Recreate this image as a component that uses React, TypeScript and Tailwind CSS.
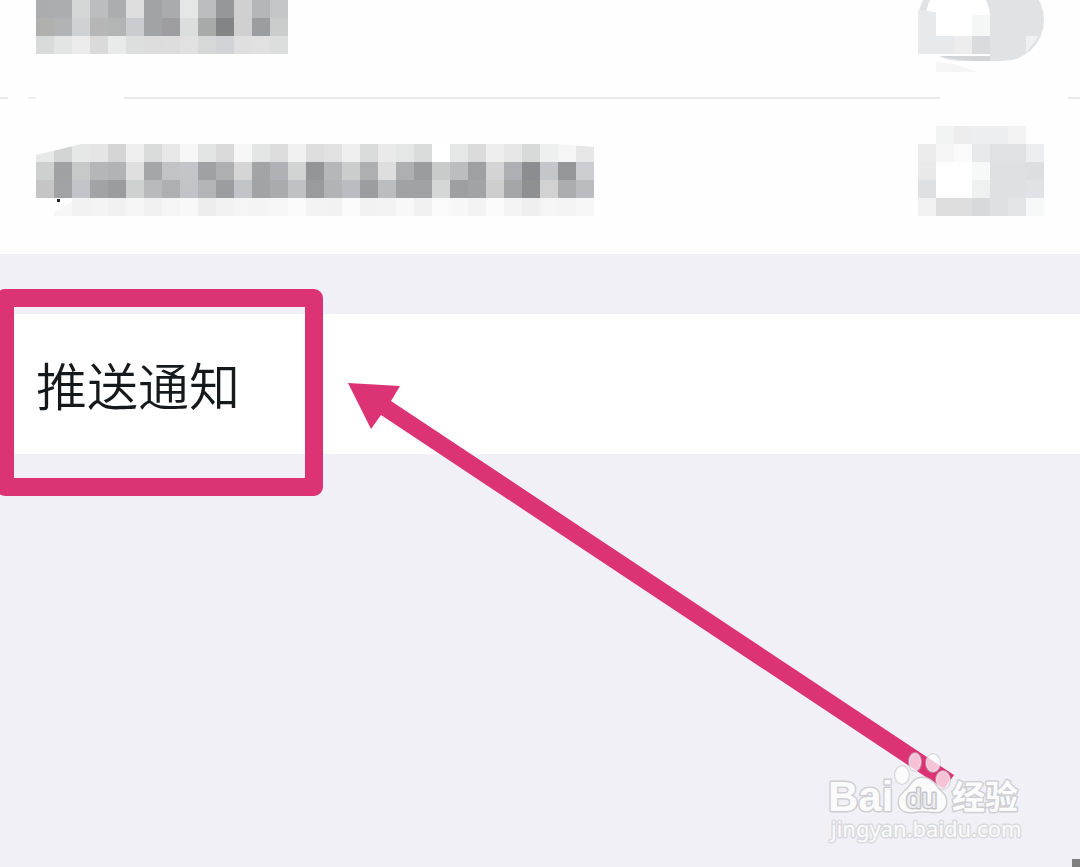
import { useState } from "react";

const CELL = 18;

// one string per row, one colour per 18px block, "-" leaves a block empty
const NAME_BLOCKS = [
  "abacae acadaf d5d7d6 bcbdbf acadaf dedede a2a3a5 aaabad e5e7e6 bcbdbf 969799 d0d0d1 b5b6b8 c5c6c8",
  "b0b1af b2b3b5 d0d1d3 b5b6b5 b3b4b4 caccd0 a2a3a5 9e9ea0 dcdedd a8aaa9 838486 d0d0d1 9c9da0 cbcdcc",
  "d9dbda e3e5e4 ebebeb dadada e9ebea dddfde dcdcdc dedddd e1e1e1 d6d8d8 d1d3d7 dfdfdf e0e1e0 dcdedd",
];

const DETAIL_BLOCKS = [
  "e7e9e8 d3d5d4 e6e8e7 e5e5e5 d5d5d5 efefef dadcdb e7e8e7 f7f7f7 e3e5e4 dadada f7f7f7 e4e6e5 dbdcdb f1f1f1 dedede e0e1e0 efefef dadcdb eaeaea e5e7e6 dadcdb ffffff e6e8e7 dbdbdb eeeeee e7e7e7 d8d9d9 eeefef f5f5f5 e7e7e7",
  "cdd0ce a0a1a3 c6c9c7 b5b6b8 b2b3b5 dfdfdf a5a6a8 c2c3c5 c4c5c8 a0a1a3 aeafb1 d5d5d5 a3a4a6 b0b1b4 d2d4d3 949597 b6b7b9 cbcdcc aeafb1 dedede aeafb0 9b9c9e c9cbca bcbdbf 9fa0a2 d4d4d4 aeafb2 8c8d8f c5c6c9 959698 cdced1",
  "c5c5c6 a2a3a5 c3c4c7 a2a3a5 9b9c9e cfd1d0 b9babc aeafb1 c2c3c6 b4b5b7 9c9d9f c2c3c6 a2a3a5 aaabad c0c1c3 9a9b9d b2b3b5 bbbcbf 9c9d9f bcbdbf a1a2a3 a1a2a3 d5d7d6 9e9fa0 a2a3a5 cecece a5a6a8 8f9092 d2d2d2 acadaf bbbcbf",
  "- f7f7f7 f2f2f2 f4f4f4 f1f1f1 f6f6f6 f1f1f1 f5f5f5 f8f8f8 ededed f2f2f2 f5f5f5 f4f4f4 f7f7f7 fafafa f3f3f3 f2f2f2 fafafa f2f2f2 f3f3f3 f8f8f8 f1f1f1 fafafa f7f7f7 f3f3f3 fafafa f4f4f4 efefef f5f5f5 f4f4f4 f7f7f7",
];

const SWITCH_BLOCKS = [
  "- f2f4f3 ededed eceef1 eceef1 f3f3f3 -",
  "ebebeb f5f5f5 fafafa e7e9ea e0e1e3 e0e1e3 eceef0",
  "e9e9e9 ffffff ffffff f7f9f8 dfe0e2 dfe0e2 dddee1",
  "dfe0e2 ffffff ffffff eff1f0 dfe0e2 dfe0e2 e1e2e5",
  "f2f2f2 dedede dedede d8d9db dfe0e3 e4e5e8 f7f8f8",
];

function Blocks({ rows }: { rows: string[] }) {
  return (
    <g shapeRendering="crispEdges">
      {rows.map((row, y) =>
        row.split(" ").map((c, x) =>
          c === "-" ? null : (
            <rect
              key={`${x}-${y}`}
              x={x * CELL}
              y={y * CELL}
              width={CELL}
              height={CELL}
              fill={`#${c}`}
            />
          )
        )
      )}
    </g>
  );
}

function Switch({ label, children }: { label: string; children: React.ReactNode }) {
  const [on, setOn] = useState(false);

  return (
    <button
      type="button"
      role="switch"
      aria-checked={on}
      aria-label={label}
      onClick={() => setOn(!on)}
      className="shrink-0"
    >
      {children}
    </button>
  );
}

function Divider() {
  return (
    <div className="flex h-0.5">
      <span className="w-2 bg-[#e9e9e9]" />
      <span className="w-5" />
      <span className="w-2 bg-[#efefef]" />
      <span className="w-[88px]" />
      <span className="flex-1 bg-[#e9e9e9]" />
      <span className="w-[128px]" />
      <span className="w-3 bg-[#e9e9e9]" />
    </div>
  );
}

function Watermark() {
  return (
    <svg
      width="200"
      height="100"
      viewBox="825 748 200 100"
      className="absolute right-[55px] bottom-[19px]"
      aria-label="Baidu 经验"
    >
      <g
        fill="#fbfbfc"
        stroke="#cfcfd3"
        strokeWidth="3"
        paintOrder="stroke"
        strokeLinejoin="round"
      >
        <g fill="#fff" fillOpacity="0.7" stroke="#c4c4c8" strokeWidth="2" strokeOpacity="0.6">
          <ellipse cx="902" cy="775" rx="7" ry="9" />
          <ellipse cx="915" cy="762" rx="6" ry="9" />
          <ellipse cx="933" cy="763" rx="7" ry="9" />
          <ellipse cx="943" cy="780" rx="7" ry="9" />
        </g>
        <path d="M922 778c-6 0-9 4-12 8-4 6-11 8-11 16 0 7 5 10 11 10 5 0 8-1 13-1s8 1 13 1c6 0 10-4 10-10 0-8-6-10-10-16-3-4-7-8-14-8z" />
        <text x="828" y="811" fontSize="42" fontWeight="700" fontFamily="Liberation Sans, sans-serif">
          Bai
        </text>
        <text
          x="906"
          y="808"
          fontSize="28"
          fill="#ececf0"
          stroke="#c4c4c8"
          fontFamily="Liberation Sans, sans-serif"
        >
          du
        </text>
        <text x="952" y="809" fontSize="33" fontWeight="700" fontFamily="Noto Sans CJK SC, sans-serif">
          经验
        </text>
        <text
          x="831"
          y="837"
          fontSize="22"
          stroke="#dadade"
          fontFamily="Noto Sans, sans-serif"
        >
          jingyan.baidu.com
        </text>
      </g>
    </svg>
  );
}

export default function App() {
  return (
    <main className="relative min-h-screen overflow-hidden bg-[#f1f0f6] font-['Liberation_Sans','Noto_Sans_CJK_SC',sans-serif] text-[#15191c]">
      <section className="bg-[#fefefe]">
        <div className="flex items-start justify-between px-9 pb-[25px]">
          <svg width="252" height="54" aria-hidden="true">
            <Blocks rows={NAME_BLOCKS} />
          </svg>
          <Switch label="1">
            <svg width="126" height="72" viewBox="918 0 126 72" className="block">
              <rect x="918" y="-21" width="126" height="82" rx="41" fill="#e1e2e4" />
              <circle cx="958" cy="16" r="32" fill="#fff" />
              <path d="M918 10l18 2v24h18v18h-36z" fill="#e8e9ea" />
              <path d="M936 12h36v24h-36z" fill="#fff" />
              <path d="M972 15h18v21h-18z" fill="#f5f6f6" />
              <path d="M954 36h18v18h-18z" fill="#ededed" />
              <path d="M972 36h18v18h-18z" fill="#dadbdd" />
              <path d="M1026 36h13l-13 17z" fill="#eff0f1" />
              <path d="M918 54h72v2h-56l-16 16z" fill="#fefefe" />
              <path d="M940 56q18 5 50 5v-5z" fill="#d4d5d7" />
              <path d="M936 62l18 2 23 8h-41z" fill="#f5f5f5" />
            </svg>
          </Switch>
        </div>
        <Divider />
        <div className="flex items-end justify-between px-9 pt-[27px] pb-[38px]">
          <svg width="558" height="72" aria-hidden="true">
            <Blocks rows={DETAIL_BLOCKS} />
            <path d="M0 0h45L0 11z" fill="#fefefe" />
            <path d="M522 0h36v3z" fill="#fefefe" />
            <path d="M18 54h18v4l-18 10z" fill="#fefefe" />
            <rect x="21" y="55" width="3" height="3" fill="#222" />
          </svg>
          <Switch label="2">
            <svg width="126" height="90" className="block">
              <Blocks rows={SWITCH_BLOCKS} />
            </svg>
          </Switch>
        </div>
      </section>

      <button
        type="button"
        className="mt-15 flex h-[140px] w-full items-center bg-white px-9 text-left font-['Noto_Sans_CJK_SC',sans-serif] text-[51px] leading-none font-[350]"
      >
        推送通知
      </button>

      <svg
        width="1080"
        height="867"
        className="pointer-events-none absolute top-0 left-0"
        aria-hidden="true"
      >
        <rect
          x="5"
          y="298"
          width="309"
          height="189"
          fill="none"
          stroke="#dc3375"
          strokeWidth="18"
          strokeLinejoin="round"
        />
        <path d="M348 383l52 3-9 15 563 374-10 14-563-374-10 14z" fill="#dc3375" />
      </svg>

      <Watermark />
      <span className="absolute right-0 bottom-0 size-2 bg-[#7f7f7f]" />
    </main>
  );
}
